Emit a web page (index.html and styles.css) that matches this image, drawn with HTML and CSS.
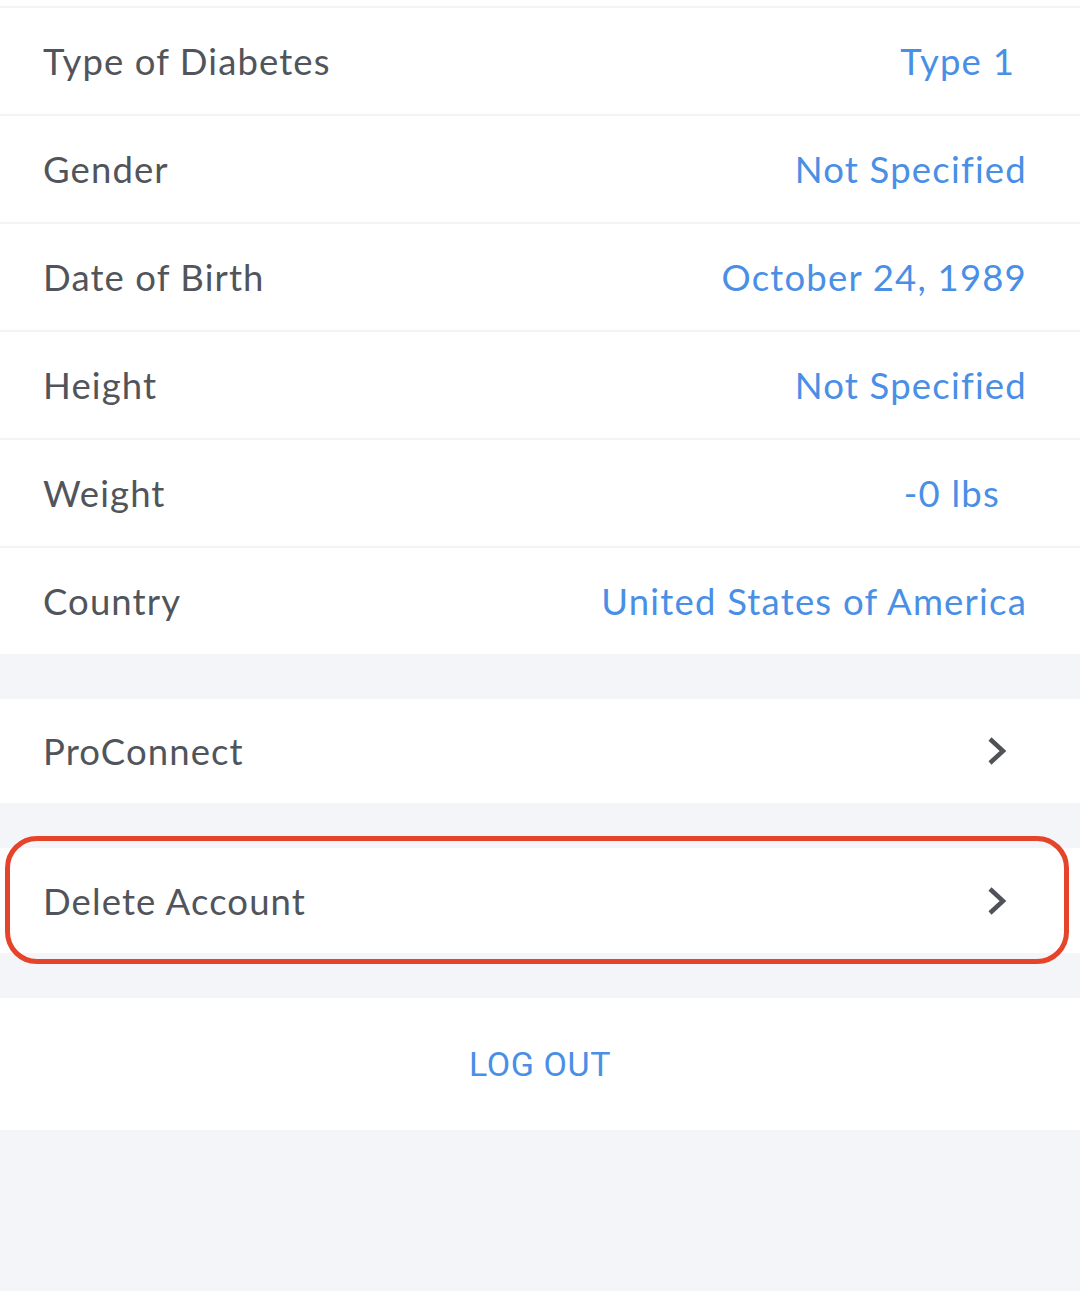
FILE: index.html
```html
<!DOCTYPE html>
<html>
<head>
<meta charset="utf-8">
<link rel="stylesheet" href="styles.css">
</head>
<body>
<div class="top-cap"></div>
<section class="group">
  <div class="row"><span class="label">Type of Diabetes</span><span class="value inset-12">Type 1</span></div>
  <div class="row"><span class="label">Gender</span><span class="value">Not Specified</span></div>
  <div class="row"><span class="label">Date of Birth</span><span class="value">October 24, 1989</span></div>
  <div class="row"><span class="label">Height</span><span class="value">Not Specified</span></div>
  <div class="row"><span class="label">Weight</span><span class="value inset-27">-0 lbs</span></div>
  <div class="row"><span class="label">Country</span><span class="value">United States of America</span></div>
</section>
<section class="group gap">
  <div class="row link"><span class="label">ProConnect</span>
    <svg class="chev" width="22" height="32" viewBox="0 0 22 32"><polyline points="4,4 17,16 4,28" fill="none" stroke="#4f5358" stroke-width="4.5"/></svg>
  </div>
</section>
<section class="group gap">
  <div class="row link danger"><span class="label">Delete Account</span>
    <svg class="chev" width="22" height="32" viewBox="0 0 22 32"><polyline points="4,4 17,16 4,28" fill="none" stroke="#4f5358" stroke-width="4.5"/></svg>
    <span class="highlight"></span>
  </div>
</section>
<section class="group gap">
  <div class="logout">LOG OUT</div>
</section>
</body>
</html>
```
FILE: styles.css
```css
html, body {
  margin: 0;
  padding: 0;
  background: #f4f5f9;
  font-family: "Lato", "Open Sans", sans-serif;
}
.top-cap {
  height: 6px;
  background: #ffffff;
}
.group {
  background: #ffffff;
}
.gap {
  margin-top: 45px;
}
.row {
  display: flex;
  align-items: center;
  justify-content: space-between;
  height: 106px;
  border-top: 2px solid #f2f3f6;
  padding: 0 53px 0 43px;
  box-sizing: content-box;
}
.group.gap .row {
  border-top: none;
  height: 104px;
}
.label {
  color: #51555b;
  font-size: 36.5px;
  letter-spacing: 1.1px;
}
.value {
  color: #4a8fe6;
  font-size: 36.5px;
  letter-spacing: 1.2px;
}
.inset-12 { margin-right: 12px; }
.inset-27 { margin-right: 27px; }
.link {
  padding-right: 72px;
  position: relative;
}
.chev {
  display: block;
}
.danger {
  height: 105px !important;
}
.highlight {
  position: absolute;
  left: 5px;
  right: 11px;
  top: -12px;
  bottom: -11px;
  border: 5px solid #e5432a;
  border-radius: 32px;
  pointer-events: none;
}
.logout {
  height: 132px;
  display: flex;
  align-items: center;
  justify-content: center;
  color: #4a8fe6;
  font-family: "Roboto", sans-serif;
  font-size: 34px;
  letter-spacing: 0.6px;
}
```
